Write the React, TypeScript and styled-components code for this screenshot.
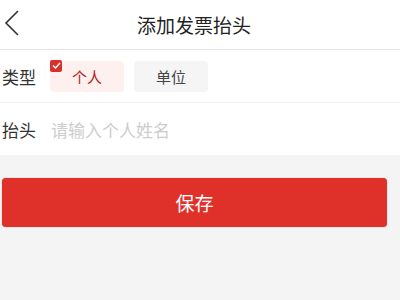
import { FC } from "react";
import styled, { createGlobalStyle } from "styled-components";

const GlobalStyle = createGlobalStyle`
	html, body {
		margin: 0;
		padding: 0;
		background: #f4f4f4;
		font-family: "Noto Sans CJK SC", "Noto Sans", sans-serif;
	}
`;

const StyledPage = styled.div`
	width: 400px;
	height: 300px;
	background: #f4f4f4;
	overflow: hidden;
`;

const StyledHeader = styled.div`
	height: 49px;
	display: flex;
	align-items: center;
	justify-content: center;
	position: relative;
	background: #fff;
	border-bottom: 1px solid #e6e6e6;
`;

const StyledBack = styled.button`
	position: absolute;
	left: 3px;
	top: 9px;
	width: 18px;
	height: 28px;
	padding: 0;
	border: none;
	background: none;
`;

const StyledTitle = styled.h1`
	margin: 0;
	padding-right: 12px;
	font-size: 19px;
	font-weight: 400;
	color: #222;
	line-height: 1;
`;

const StyledForm = styled.div`
	background: #fff;
`;

const StyledRow = styled.div`
	height: 52px;
	display: flex;
	align-items: center;
	padding-left: 2px;
	& + & {
		border-top: 1px solid #f0f0f0;
	}
`;

const StyledLabel = styled.span`
	width: 48px;
	font-size: 17px;
	color: #333;
	flex-shrink: 0;
`;

const StyledChips = styled.div`
	display: flex;
	gap: 10px;
`;

const StyledChip = styled.div<{ $active?: boolean }>`
	position: relative;
	width: 74px;
	height: 31px;
	border-radius: 4px;
	display: flex;
	align-items: center;
	justify-content: center;
	font-size: 15px;
	background: ${(p) => (p.$active ? "#fdf0ef" : "#f5f5f5")};
	color: ${(p) => (p.$active ? "#b5231d" : "#444")};
`;

const StyledCheck = styled.span`
	position: absolute;
	left: 0;
	top: -1px;
	width: 12px;
	height: 12px;
	border-radius: 2px;
	background: #d9302a;
	display: flex;
	align-items: center;
	justify-content: center;
`;

const StyledInput = styled.input`
	flex: 1;
	border: none;
	outline: none;
	padding: 0;
	margin-left: 1px;
	font-family: inherit;
	font-size: 17px;
	color: #333;
	background: transparent;
	&::placeholder {
		color: #cdcdcd;
	}
`;

const StyledActions = styled.div`
	padding: 23px 13px 0 2px;
`;

const StyledSave = styled.button`
	width: 100%;
	height: 49px;
	border: none;
	border-radius: 4px;
	background: #e0302a;
	color: #fff;
	font-family: inherit;
	font-size: 19px;
	box-shadow: 0 0 1px rgba(160, 20, 20, 0.6);
`;

const App: FC = () => {
	return (
		<StyledPage>
			<GlobalStyle />
			<StyledHeader>
				<StyledBack>
					<svg width="18" height="28" viewBox="0 0 18 28">
						<path d="M15 2 L3 14 L15 26" fill="none" stroke="#333" strokeWidth="1.6" />
					</svg>
				</StyledBack>
				<StyledTitle>添加发票抬头</StyledTitle>
			</StyledHeader>
			<StyledForm>
				<StyledRow>
					<StyledLabel>类型</StyledLabel>
					<StyledChips>
						<StyledChip $active>
							<StyledCheck>
								<svg width="9" height="7" viewBox="0 0 9 7">
									<path d="M1 3.5 L3.5 6 L8 1" fill="none" stroke="#fff" strokeWidth="1.5" />
								</svg>
							</StyledCheck>
							个人
						</StyledChip>
						<StyledChip>单位</StyledChip>
					</StyledChips>
				</StyledRow>
				<StyledRow>
					<StyledLabel>抬头</StyledLabel>
					<StyledInput placeholder="请输入个人姓名" />
				</StyledRow>
			</StyledForm>
			<StyledActions>
				<StyledSave>保存</StyledSave>
			</StyledActions>
		</StyledPage>
	);
};

export default App;
